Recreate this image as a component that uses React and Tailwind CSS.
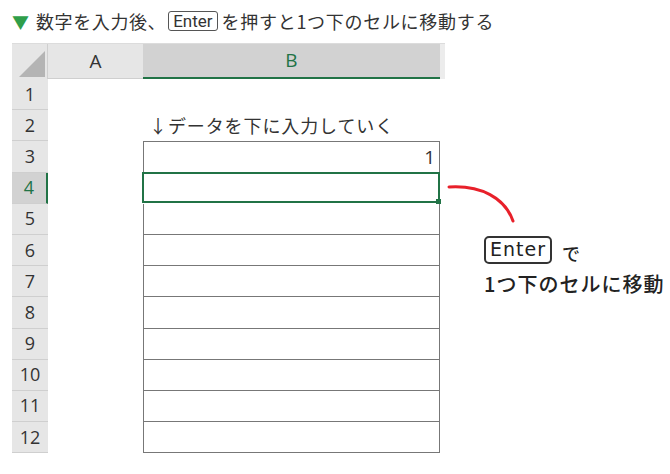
const jp = { fontFamily: '"Noto Sans CJK JP", "Noto Sans", sans-serif' }
const rows = [1, 2, 3, 4, 5, 6, 7, 8, 9, 10, 11, 12]

function RowHeader({ n, active }) {
  return (
    <div
      className={`w-[36px] h-full flex items-center justify-center text-[18px] border-b border-[#cfcfcf] ${
        active ? 'bg-[#d2d2d2] text-[#217346] border-r-2 border-r-[#217346]' : 'bg-[#e6e6e6] text-[#333]'
      }`}
      style={{ fontFamily: '"Open Sans", "Noto Sans", sans-serif' }}
    >
      {n}
    </div>
  )
}

function CellB({ n }) {
  if (n < 3) {
    return (
      <div className="w-[297px] h-full flex items-end pb-[2px] pl-[6px] text-[18px] text-[#333] tracking-[0.9px]" style={jp}>
        {n === 2 ? '↓データを下に入力していく' : ''}
      </div>
    )
  }
  if (n === 4) {
    return (
      <div className="w-[298px] h-full relative -ml-px border-2 border-[#217346] -mt-px">
        <div className="absolute -right-[3px] -bottom-[3px] w-[5px] h-[5px] bg-[#217346]" />
      </div>
    )
  }
  return (
    <div
      className={`w-[297px] h-full border-x border-b border-[#777] ${n === 3 ? 'border-t' : ''} flex items-center justify-end pr-[4px] text-[19px] text-[#333]`}
      style={{ fontFamily: '"Open Sans", "Noto Sans", sans-serif' }}
    >
      {n === 3 ? '1' : ''}
    </div>
  )
}

export default function App() {
  return (
    <div className="w-[670px] h-[474px] bg-white relative overflow-hidden" style={jp}>
      {/* title */}
      <div className="flex items-center h-[42px] pl-[12px] text-[18px] text-[#333]">
        <span className="text-[#2f9e4a] text-[17px] mr-[7px] mt-[1px]">▼</span>
        <span className="tracking-[0.6px]">数字を入力後、</span>
        <span
          className="border border-[#555] rounded-[3px] px-[4px] h-[20px] flex items-center text-[17px] leading-none mx-[2px]"
          style={{ fontFamily: '"Roboto", "Noto Sans", sans-serif' }}
        >
          Enter
        </span>
        <span className="tracking-[0.7px] ml-[2px]">を押すと1つ下のセルに移動する</span>
      </div>

      {/* sheet */}
      <div className="ml-[12px] mt-[1px] w-[433px]">
        <div className="flex h-[36px] border-t border-[#dcdcdc]">
          <div className="w-[36px] bg-[#e6e6e6] border-r border-[#cfcfcf] flex items-end justify-end pr-[2px] pb-[2px]">
            <svg width="26" height="26" viewBox="0 0 26 26">
              <polygon points="26,0 26,26 0,26" fill="#b4b4b4" />
            </svg>
          </div>
          <div
            className="w-[95px] bg-[#e6e6e6] flex items-center justify-center text-[19px] text-[#333] border-b border-[#cfcfcf]"
            style={{ fontFamily: '"Open Sans", "Noto Sans", sans-serif' }}
          >
            A
          </div>
          <div
            className="w-[297px] bg-[#d2d2d2] flex items-center justify-center text-[19px] text-[#217346] border-b-2 border-[#217346]"
            style={{ fontFamily: '"Open Sans", "Noto Sans", sans-serif' }}
          >
            B
          </div>
          <div className="w-[5px] bg-[#ececec]" />
        </div>
        {rows.map((n) => (
          <div key={n} className="flex h-[31.2px]">
            <RowHeader n={n} active={n === 4} />
            <div className="w-[95px]" />
            <CellB n={n} />
          </div>
        ))}
      </div>

      {/* callout */}
      <svg className="absolute left-[445px] top-[180px]" width="80" height="50" viewBox="0 0 80 50">
        <path d="M4 7 C 36 5, 60 18, 68 41" fill="none" stroke="#e8202a" strokeWidth="3" strokeLinecap="round" />
      </svg>
      <div className="absolute left-[484px] top-[232px] text-[#222]">
        <div className="flex items-center gap-[10px]">
          <span
            className="border-2 border-[#333] rounded-[5px] px-[4px] h-[28px] flex items-center text-[19px] tracking-[1px]"
            style={{ fontFamily: '"DejaVu Sans", sans-serif' }}
          >
            Enter
          </span>
          <span className="text-[18px] font-medium mt-[8px]">で</span>
        </div>
        <div className="text-[20px] font-medium tracking-[1px] mt-[2px] leading-[30px]">1つ下のセルに移動</div>
      </div>
    </div>
  )
}
